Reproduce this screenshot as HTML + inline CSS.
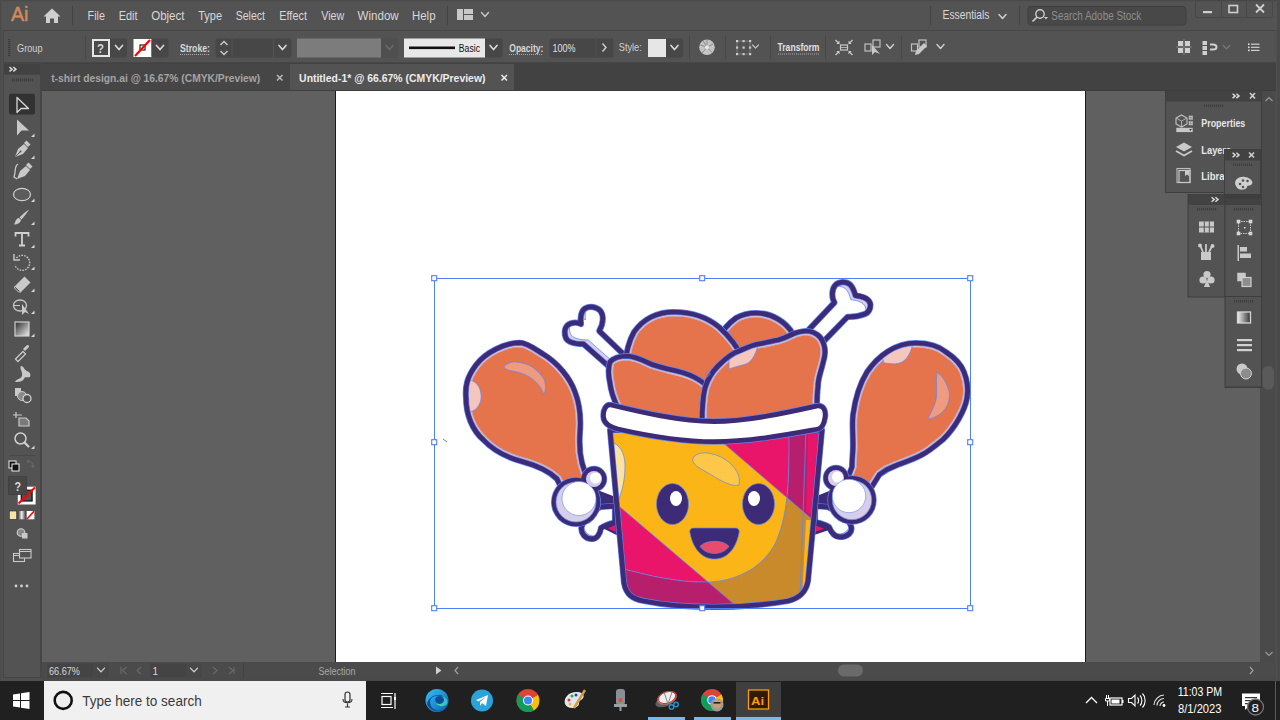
<!DOCTYPE html>
<html><head><meta charset="utf-8"><title>Illustrator</title>
<style>html,body{margin:0;padding:0;width:1280px;height:720px;overflow:hidden;background:#535353;font-family:"Liberation Sans",sans-serif}</style>
</head><body>
<svg width="1280" height="720" viewBox="0 0 1280 720" style="position:absolute;left:0;top:0;display:block"><rect x="0" y="0" width="1280" height="681" fill="#4a4a4a"/>
<rect x="1" y="1" width="1276" height="680" fill="#505050"/>
<rect x="2" y="2" width="1275" height="28" fill="#535353"/>
<rect x="3" y="30" width="1273" height="33" fill="#474747"/>
<rect x="4" y="31" width="1272" height="31" fill="#535353"/>
<rect x="42" y="63" width="1234" height="28" fill="#424242"/>
<rect x="42" y="64" width="248" height="26" fill="#464646"/>
<rect x="290" y="64" width="224" height="26" fill="#535353"/>
<rect x="42" y="90" width="1234" height="1" fill="#3d3d3d"/>
<rect x="3" y="63" width="39" height="615" fill="#464646"/>
<rect x="4" y="64" width="36" height="10" fill="#424242"/>
<rect x="4" y="75" width="36" height="602" fill="#535353"/>
<rect x="42" y="91" width="1220" height="571" fill="#606060"/>
<rect x="335" y="91" width="751" height="571" fill="#1a1a1a"/>
<rect x="336" y="91" width="749" height="571" fill="#ffffff"/>
<path d="M597,491 L618,499 L618,506 L600,505 Z" fill="#3d2b78" stroke="#3d2b78" stroke-width="2" stroke-linejoin="round"/>
<path d="M796,0" fill="none"/>
<path d="M832,491 L812,499 L812,506 L830,505 Z" fill="#3d2b78" stroke="#3d2b78" stroke-width="2" stroke-linejoin="round"/>
<clipPath id="cp1"><path d="M615,506 L600,507 C592,512 583,519 581.5,527 C580.5,533 585,539 592,539 C597,539 600,534 601,528 C605,525 610,523.5 615,522.5 Z"/></clipPath>
<path d="M615,506 L600,507 C592,512 583,519 581.5,527 C580.5,533 585,539 592,539 C597,539 600,534 601,528 C605,525 610,523.5 615,522.5 Z" fill="#d7cfe9"/>
<g clip-path="url(#cp1)"><path d="M615,506 L600,507 C592,512 583,519 581.5,527 C580.5,533 585,539 592,539 C597,539 600,534 601,528 C605,525 610,523.5 615,522.5 Z" transform="translate(2.5 -2.8)" fill="#fff" stroke="#5f86f5" stroke-width=".8"/></g>
<path d="M615,506 L600,507 C592,512 583,519 581.5,527 C580.5,533 585,539 592,539 C597,539 600,534 601,528 C605,525 610,523.5 615,522.5 Z" fill="none" stroke="#5f86f5" stroke-width="6.2" stroke-linejoin="round"/>
<path d="M615,506 L600,507 C592,512 583,519 581.5,527 C580.5,533 585,539 592,539 C597,539 600,534 601,528 C605,525 610,523.5 615,522.5 Z" fill="none" stroke="#3d2b78" stroke-width="4.8" stroke-linejoin="round"/>
<clipPath id="cp2"><path d="M815,506 L828,507 C838,512 848,518 851,526 C853,532 848,537 840,537 C834,537 831,532 829,527 C824,524 819,523 815,522 Z"/></clipPath>
<path d="M815,506 L828,507 C838,512 848,518 851,526 C853,532 848,537 840,537 C834,537 831,532 829,527 C824,524 819,523 815,522 Z" fill="#d7cfe9"/>
<g clip-path="url(#cp2)"><path d="M815,506 L828,507 C838,512 848,518 851,526 C853,532 848,537 840,537 C834,537 831,532 829,527 C824,524 819,523 815,522 Z" transform="translate(-2.5 -2.8)" fill="#fff" stroke="#5f86f5" stroke-width=".8"/></g>
<path d="M815,506 L828,507 C838,512 848,518 851,526 C853,532 848,537 840,537 C834,537 831,532 829,527 C824,524 819,523 815,522 Z" fill="none" stroke="#5f86f5" stroke-width="6.2" stroke-linejoin="round"/>
<path d="M815,506 L828,507 C838,512 848,518 851,526 C853,532 848,537 840,537 C834,537 831,532 829,527 C824,524 819,523 815,522 Z" fill="none" stroke="#3d2b78" stroke-width="4.8" stroke-linejoin="round"/>
<path d="M605,528 L617,523 L617,534 Z" fill="#e8156a" stroke="#3d2b78" stroke-width="2.5" stroke-linejoin="round"/>
<path d="M828,529 L813,523 L813,534 Z" fill="#e8156a" stroke="#3d2b78" stroke-width="2.5" stroke-linejoin="round"/>
<clipPath id="cp3"><path d="M519.5,342.7 C505,343 486,352 476,365 C467,377 465,386 466,398 C466,414 472,430 483.5,440 C493,450 505,457 522,461.5 C535,465 548,470 557,479 L566,498 L590,488 L582,463 C580,455 579,445 580,432 C581,419 580,405 575,392 C570,378 558,363 543,354 C535,349 527,342.7 519.5,342.7 Z"/></clipPath>
<path d="M519.5,342.7 C505,343 486,352 476,365 C467,377 465,386 466,398 C466,414 472,430 483.5,440 C493,450 505,457 522,461.5 C535,465 548,470 557,479 L566,498 L590,488 L582,463 C580,455 579,445 580,432 C581,419 580,405 575,392 C570,378 558,363 543,354 C535,349 527,342.7 519.5,342.7 Z" fill="#e5734b"/>
<path d="M519.5,342.7 C505,343 486,352 476,365 C467,377 465,386 466,398 C466,414 472,430 483.5,440 C493,450 505,457 522,461.5 C535,465 548,470 557,479 L566,498 L590,488 L582,463 C580,455 579,445 580,432 C581,419 580,405 575,392 C570,378 558,363 543,354 C535,349 527,342.7 519.5,342.7 Z" fill="none" stroke="#f3c7bd" stroke-width="9" clip-path="url(#cp3)"/>
<path d="M519.5,342.7 C505,343 486,352 476,365 C467,377 465,386 466,398 C466,414 472,430 483.5,440 C493,450 505,457 522,461.5 C535,465 548,470 557,479 L566,498 L590,488 L582,463 C580,455 579,445 580,432 C581,419 580,405 575,392 C570,378 558,363 543,354 C535,349 527,342.7 519.5,342.7 Z" fill="none" stroke="#5f86f5" stroke-width="8.4" stroke-opacity=".55" clip-path="url(#cp3)"/>
<path d="M519.5,342.7 C505,343 486,352 476,365 C467,377 465,386 466,398 C466,414 472,430 483.5,440 C493,450 505,457 522,461.5 C535,465 548,470 557,479 L566,498 L590,488 L582,463 C580,455 579,445 580,432 C581,419 580,405 575,392 C570,378 558,363 543,354 C535,349 527,342.7 519.5,342.7 Z" fill="none" stroke="#f3c7bd" stroke-width="7.4" clip-path="url(#cp3)"/>
<path d="M519.5,342.7 C505,343 486,352 476,365 C467,377 465,386 466,398 C466,414 472,430 483.5,440 C493,450 505,457 522,461.5 C535,465 548,470 557,479 L566,498 L590,488 L582,463 C580,455 579,445 580,432 C581,419 580,405 575,392 C570,378 558,363 543,354 C535,349 527,342.7 519.5,342.7 Z" fill="none" stroke="#e5734b" stroke-width="4.4" clip-path="url(#cp3)"/>
<g clip-path="url(#cp3)"><path d="M462,380 C470,378 480,382 481,394 C482,402 478,410 470,412 Z" fill="#f3c7bd" stroke="#5f86f5" stroke-width=".7"/><path d="M504,366.7 C508,362 514,361.5 517,362.2 C524,363 530,365 533,367.8 C539,372 542,376 544,379 C546,384 546,390 544,394.5 C542,390 540,386 537.3,383.4 C532,378 527,375 521.7,373.4 C516,371.5 511,371 508.4,370 C506,369 504,368 504,366.7 Z" fill="#f09a7f" stroke="#5f86f5" stroke-width=".7"/></g>
<path d="M519.5,342.7 C505,343 486,352 476,365 C467,377 465,386 466,398 C466,414 472,430 483.5,440 C493,450 505,457 522,461.5 C535,465 548,470 557,479 L566,498 L590,488 L582,463 C580,455 579,445 580,432 C581,419 580,405 575,392 C570,378 558,363 543,354 C535,349 527,342.7 519.5,342.7 Z" fill="none" stroke="#5f86f5" stroke-width="6.1" stroke-linejoin="round"/>
<path d="M519.5,342.7 C505,343 486,352 476,365 C467,377 465,386 466,398 C466,414 472,430 483.5,440 C493,450 505,457 522,461.5 C535,465 548,470 557,479 L566,498 L590,488 L582,463 C580,455 579,445 580,432 C581,419 580,405 575,392 C570,378 558,363 543,354 C535,349 527,342.7 519.5,342.7 Z" fill="none" stroke="#3d2b78" stroke-width="4.7" stroke-linejoin="round"/>
<clipPath id="cp4"><path d="M915.6,343 C930,343 940,347 946,352 C955,358 961,364 964,372 C968,382 968,392 967,398 C965,410 955,428 943,439.5 C934,447 928,452 921.5,455 C912,460 902,463 895,466 C889,468 884,471 879.5,474.5 L866,496 L845,485 L852,467 C852,460 853,452 853,445.6 C853,432 852,425 853,415 C855,400 859,385 867,372 C878,356 895,343 915.6,343 Z"/></clipPath>
<path d="M915.6,343 C930,343 940,347 946,352 C955,358 961,364 964,372 C968,382 968,392 967,398 C965,410 955,428 943,439.5 C934,447 928,452 921.5,455 C912,460 902,463 895,466 C889,468 884,471 879.5,474.5 L866,496 L845,485 L852,467 C852,460 853,452 853,445.6 C853,432 852,425 853,415 C855,400 859,385 867,372 C878,356 895,343 915.6,343 Z" fill="#e5734b"/>
<path d="M915.6,343 C930,343 940,347 946,352 C955,358 961,364 964,372 C968,382 968,392 967,398 C965,410 955,428 943,439.5 C934,447 928,452 921.5,455 C912,460 902,463 895,466 C889,468 884,471 879.5,474.5 L866,496 L845,485 L852,467 C852,460 853,452 853,445.6 C853,432 852,425 853,415 C855,400 859,385 867,372 C878,356 895,343 915.6,343 Z" fill="none" stroke="#f3c7bd" stroke-width="9" clip-path="url(#cp4)"/>
<path d="M915.6,343 C930,343 940,347 946,352 C955,358 961,364 964,372 C968,382 968,392 967,398 C965,410 955,428 943,439.5 C934,447 928,452 921.5,455 C912,460 902,463 895,466 C889,468 884,471 879.5,474.5 L866,496 L845,485 L852,467 C852,460 853,452 853,445.6 C853,432 852,425 853,415 C855,400 859,385 867,372 C878,356 895,343 915.6,343 Z" fill="none" stroke="#5f86f5" stroke-width="8.4" stroke-opacity=".55" clip-path="url(#cp4)"/>
<path d="M915.6,343 C930,343 940,347 946,352 C955,358 961,364 964,372 C968,382 968,392 967,398 C965,410 955,428 943,439.5 C934,447 928,452 921.5,455 C912,460 902,463 895,466 C889,468 884,471 879.5,474.5 L866,496 L845,485 L852,467 C852,460 853,452 853,445.6 C853,432 852,425 853,415 C855,400 859,385 867,372 C878,356 895,343 915.6,343 Z" fill="none" stroke="#f3c7bd" stroke-width="7.4" clip-path="url(#cp4)"/>
<path d="M915.6,343 C930,343 940,347 946,352 C955,358 961,364 964,372 C968,382 968,392 967,398 C965,410 955,428 943,439.5 C934,447 928,452 921.5,455 C912,460 902,463 895,466 C889,468 884,471 879.5,474.5 L866,496 L845,485 L852,467 C852,460 853,452 853,445.6 C853,432 852,425 853,415 C855,400 859,385 867,372 C878,356 895,343 915.6,343 Z" fill="none" stroke="#e5734b" stroke-width="4.4" clip-path="url(#cp4)"/>
<g clip-path="url(#cp4)"><path d="M880,350 C890,342 906,340 913,342 C912,350 908,360 900,363 C894,365 888,363 884,363 Z" fill="#f3c7bd" stroke="#5f86f5" stroke-width=".7"/><path d="M936.7,372.3 C941,374 946,381 949,391 C951,401 946,410 940,414 C936,417 931,419 927.8,419 C931,412 936,404 936.5,396 C937,388 936,380 936.7,372.3 Z" fill="#f09a7f" stroke="#5f86f5" stroke-width=".7"/></g>
<path d="M915.6,343 C930,343 940,347 946,352 C955,358 961,364 964,372 C968,382 968,392 967,398 C965,410 955,428 943,439.5 C934,447 928,452 921.5,455 C912,460 902,463 895,466 C889,468 884,471 879.5,474.5 L866,496 L845,485 L852,467 C852,460 853,452 853,445.6 C853,432 852,425 853,415 C855,400 859,385 867,372 C878,356 895,343 915.6,343 Z" fill="none" stroke="#5f86f5" stroke-width="6.1" stroke-linejoin="round"/>
<path d="M915.6,343 C930,343 940,347 946,352 C955,358 961,364 964,372 C968,382 968,392 967,398 C965,410 955,428 943,439.5 C934,447 928,452 921.5,455 C912,460 902,463 895,466 C889,468 884,471 879.5,474.5 L866,496 L845,485 L852,467 C852,460 853,452 853,445.6 C853,432 852,425 853,415 C855,400 859,385 867,372 C878,356 895,343 915.6,343 Z" fill="none" stroke="#3d2b78" stroke-width="4.7" stroke-linejoin="round"/>
<circle cx="594" cy="479" r="13.2" fill="#5f86f5"/>
<circle cx="576" cy="502" r="25.0" fill="#5f86f5"/>
<circle cx="836" cy="478" r="13.2" fill="#5f86f5"/>
<circle cx="852" cy="500" r="24.7" fill="#5f86f5"/>
<circle cx="594" cy="479" r="12.5" fill="#3d2b78"/>
<circle cx="576" cy="502" r="24.3" fill="#3d2b78"/>
<circle cx="836" cy="478" r="12.5" fill="#3d2b78"/>
<circle cx="852" cy="500" r="24" fill="#3d2b78"/>
<circle cx="594" cy="479" r="8" fill="#d7cfe9"/><circle cx="595.5" cy="478" r="5.5" fill="#fff"/>
<circle cx="836" cy="478" r="8" fill="#d7cfe9"/><circle cx="837.5" cy="477" r="5.5" fill="#fff"/>
<circle cx="576" cy="502" r="20" fill="#d7cfe9" stroke="#5f86f5" stroke-width=".7"/><circle cx="579" cy="498.5" r="17" fill="#fff" stroke="#5f86f5" stroke-width=".6"/>
<circle cx="852" cy="500" r="19.7" fill="#d7cfe9" stroke="#5f86f5" stroke-width=".7"/><circle cx="849" cy="496" r="16.7" fill="#fff" stroke="#5f86f5" stroke-width=".6"/>
<clipPath id="cp5"><path d="M610.8,368.2 L583.7,344.2 C576,344 567,343 565.5,337 C563.5,330 566,325 570.5,323.5 C575,322 579,323 581,324 C580,318 581,311 585,308.5 C590,305.5 597,307 600.5,311 C603.5,315 604,323 599.2,330.9 L624.2,354.9 Z"/></clipPath>
<path d="M610.8,368.2 L583.7,344.2 C576,344 567,343 565.5,337 C563.5,330 566,325 570.5,323.5 C575,322 579,323 581,324 C580,318 581,311 585,308.5 C590,305.5 597,307 600.5,311 C603.5,315 604,323 599.2,330.9 L624.2,354.9 Z" fill="#d7cfe9"/>
<g clip-path="url(#cp5)"><path d="M610.8,368.2 L583.7,344.2 C576,344 567,343 565.5,337 C563.5,330 566,325 570.5,323.5 C575,322 579,323 581,324 C580,318 581,311 585,308.5 C590,305.5 597,307 600.5,311 C603.5,315 604,323 599.2,330.9 L624.2,354.9 Z" transform="translate(4.6 -4.2)" fill="#fff" stroke="#5f86f5" stroke-width=".8"/></g>
<path d="M610.8,368.2 L583.7,344.2 C576,344 567,343 565.5,337 C563.5,330 566,325 570.5,323.5 C575,322 579,323 581,324 C580,318 581,311 585,308.5 C590,305.5 597,307 600.5,311 C603.5,315 604,323 599.2,330.9 L624.2,354.9 Z" fill="none" stroke="#5f86f5" stroke-width="6.2" stroke-linejoin="round"/>
<path d="M610.8,368.2 L583.7,344.2 C576,344 567,343 565.5,337 C563.5,330 566,325 570.5,323.5 C575,322 579,323 581,324 C580,318 581,311 585,308.5 C590,305.5 597,307 600.5,311 C603.5,315 604,323 599.2,330.9 L624.2,354.9 Z" fill="none" stroke="#3d2b78" stroke-width="4.8" stroke-linejoin="round"/>
<clipPath id="cp6"><path d="M808.5,330 L834.5,302.5 C831.5,298 831.5,290 835,285.5 C838.5,281.5 846,281 850,284.5 C853,287 854,291 855.5,295.5 C860,296 866,297 869,301 C872,305 870,312 865,314 C860,316 853,317 847.5,316.8 L824,341 Z"/></clipPath>
<path d="M808.5,330 L834.5,302.5 C831.5,298 831.5,290 835,285.5 C838.5,281.5 846,281 850,284.5 C853,287 854,291 855.5,295.5 C860,296 866,297 869,301 C872,305 870,312 865,314 C860,316 853,317 847.5,316.8 L824,341 Z" fill="#d7cfe9"/>
<g clip-path="url(#cp6)"><path d="M808.5,330 L834.5,302.5 C831.5,298 831.5,290 835,285.5 C838.5,281.5 846,281 850,284.5 C853,287 854,291 855.5,295.5 C860,296 866,297 869,301 C872,305 870,312 865,314 C860,316 853,317 847.5,316.8 L824,341 Z" transform="translate(-4.6 4.2)" fill="#fff" stroke="#5f86f5" stroke-width=".8"/></g>
<path d="M808.5,330 L834.5,302.5 C831.5,298 831.5,290 835,285.5 C838.5,281.5 846,281 850,284.5 C853,287 854,291 855.5,295.5 C860,296 866,297 869,301 C872,305 870,312 865,314 C860,316 853,317 847.5,316.8 L824,341 Z" fill="none" stroke="#5f86f5" stroke-width="6.2" stroke-linejoin="round"/>
<path d="M808.5,330 L834.5,302.5 C831.5,298 831.5,290 835,285.5 C838.5,281.5 846,281 850,284.5 C853,287 854,291 855.5,295.5 C860,296 866,297 869,301 C872,305 870,312 865,314 C860,316 853,317 847.5,316.8 L824,341 Z" fill="none" stroke="#3d2b78" stroke-width="4.8" stroke-linejoin="round"/>
<clipPath id="cp7"><path d="M712,370 C712,345 722,328 736,318 C745,313 752,313 756,313 C772,313 786,322 793,334 C797,342 798,350 798,360 L798,405 L712,405 Z"/></clipPath>
<path d="M712,370 C712,345 722,328 736,318 C745,313 752,313 756,313 C772,313 786,322 793,334 C797,342 798,350 798,360 L798,405 L712,405 Z" fill="#e5734b"/>
<path d="M712,370 C712,345 722,328 736,318 C745,313 752,313 756,313 C772,313 786,322 793,334 C797,342 798,350 798,360 L798,405 L712,405 Z" fill="none" stroke="#f3c7bd" stroke-width="9" clip-path="url(#cp7)"/>
<path d="M712,370 C712,345 722,328 736,318 C745,313 752,313 756,313 C772,313 786,322 793,334 C797,342 798,350 798,360 L798,405 L712,405 Z" fill="none" stroke="#5f86f5" stroke-width="8.4" stroke-opacity=".55" clip-path="url(#cp7)"/>
<path d="M712,370 C712,345 722,328 736,318 C745,313 752,313 756,313 C772,313 786,322 793,334 C797,342 798,350 798,360 L798,405 L712,405 Z" fill="none" stroke="#f3c7bd" stroke-width="7.4" clip-path="url(#cp7)"/>
<path d="M712,370 C712,345 722,328 736,318 C745,313 752,313 756,313 C772,313 786,322 793,334 C797,342 798,350 798,360 L798,405 L712,405 Z" fill="none" stroke="#e5734b" stroke-width="4.4" clip-path="url(#cp7)"/>
<path d="M712,370 C712,345 722,328 736,318 C745,313 752,313 756,313 C772,313 786,322 793,334 C797,342 798,350 798,360 L798,405 L712,405 Z" fill="none" stroke="#5f86f5" stroke-width="6.1" stroke-linejoin="round"/>
<path d="M712,370 C712,345 722,328 736,318 C745,313 752,313 756,313 C772,313 786,322 793,334 C797,342 798,350 798,360 L798,405 L712,405 Z" fill="none" stroke="#3d2b78" stroke-width="4.7" stroke-linejoin="round"/>
<clipPath id="cp8"><path d="M624,405 C622,380 624,350 634,332 C644,318 658,312 674,312 C694,312 708,318 719,327 C729,336 737,346 744,360 L752,405 Z"/></clipPath>
<path d="M624,405 C622,380 624,350 634,332 C644,318 658,312 674,312 C694,312 708,318 719,327 C729,336 737,346 744,360 L752,405 Z" fill="#e5734b"/>
<path d="M624,405 C622,380 624,350 634,332 C644,318 658,312 674,312 C694,312 708,318 719,327 C729,336 737,346 744,360 L752,405 Z" fill="none" stroke="#f3c7bd" stroke-width="9" clip-path="url(#cp8)"/>
<path d="M624,405 C622,380 624,350 634,332 C644,318 658,312 674,312 C694,312 708,318 719,327 C729,336 737,346 744,360 L752,405 Z" fill="none" stroke="#5f86f5" stroke-width="8.4" stroke-opacity=".55" clip-path="url(#cp8)"/>
<path d="M624,405 C622,380 624,350 634,332 C644,318 658,312 674,312 C694,312 708,318 719,327 C729,336 737,346 744,360 L752,405 Z" fill="none" stroke="#f3c7bd" stroke-width="7.4" clip-path="url(#cp8)"/>
<path d="M624,405 C622,380 624,350 634,332 C644,318 658,312 674,312 C694,312 708,318 719,327 C729,336 737,346 744,360 L752,405 Z" fill="none" stroke="#e5734b" stroke-width="4.4" clip-path="url(#cp8)"/>
<path d="M624,405 C622,380 624,350 634,332 C644,318 658,312 674,312 C694,312 708,318 719,327 C729,336 737,346 744,360 L752,405 Z" fill="none" stroke="#5f86f5" stroke-width="6.1" stroke-linejoin="round"/>
<path d="M624,405 C622,380 624,350 634,332 C644,318 658,312 674,312 C694,312 708,318 719,327 C729,336 737,346 744,360 L752,405 Z" fill="none" stroke="#3d2b78" stroke-width="4.7" stroke-linejoin="round"/>
<clipPath id="cp9"><path d="M618,408 C614,400 611,392 610,383 C608,374 608,368 610,362 C614,357 620,356 628,356 C638,357 646,362 652,364.5 C660,367 664,368 668,369 C678,371 686,373 694,377 C702,381 708,386 712,392 L714,425 L618,425 Z"/></clipPath>
<path d="M618,408 C614,400 611,392 610,383 C608,374 608,368 610,362 C614,357 620,356 628,356 C638,357 646,362 652,364.5 C660,367 664,368 668,369 C678,371 686,373 694,377 C702,381 708,386 712,392 L714,425 L618,425 Z" fill="#e5734b"/>
<path d="M618,408 C614,400 611,392 610,383 C608,374 608,368 610,362 C614,357 620,356 628,356 C638,357 646,362 652,364.5 C660,367 664,368 668,369 C678,371 686,373 694,377 C702,381 708,386 712,392 L714,425 L618,425 Z" fill="none" stroke="#f3c7bd" stroke-width="9" clip-path="url(#cp9)"/>
<path d="M618,408 C614,400 611,392 610,383 C608,374 608,368 610,362 C614,357 620,356 628,356 C638,357 646,362 652,364.5 C660,367 664,368 668,369 C678,371 686,373 694,377 C702,381 708,386 712,392 L714,425 L618,425 Z" fill="none" stroke="#5f86f5" stroke-width="8.4" stroke-opacity=".55" clip-path="url(#cp9)"/>
<path d="M618,408 C614,400 611,392 610,383 C608,374 608,368 610,362 C614,357 620,356 628,356 C638,357 646,362 652,364.5 C660,367 664,368 668,369 C678,371 686,373 694,377 C702,381 708,386 712,392 L714,425 L618,425 Z" fill="none" stroke="#f3c7bd" stroke-width="7.4" clip-path="url(#cp9)"/>
<path d="M618,408 C614,400 611,392 610,383 C608,374 608,368 610,362 C614,357 620,356 628,356 C638,357 646,362 652,364.5 C660,367 664,368 668,369 C678,371 686,373 694,377 C702,381 708,386 712,392 L714,425 L618,425 Z" fill="none" stroke="#e5734b" stroke-width="4.4" clip-path="url(#cp9)"/>
<path d="M618,408 C614,400 611,392 610,383 C608,374 608,368 610,362 C614,357 620,356 628,356 C638,357 646,362 652,364.5 C660,367 664,368 668,369 C678,371 686,373 694,377 C702,381 708,386 712,392 L714,425 L618,425 Z" fill="none" stroke="#5f86f5" stroke-width="6.1" stroke-linejoin="round"/>
<path d="M618,408 C614,400 611,392 610,383 C608,374 608,368 610,362 C614,357 620,356 628,356 C638,357 646,362 652,364.5 C660,367 664,368 668,369 C678,371 686,373 694,377 C702,381 708,386 712,392 L714,425 L618,425 Z" fill="none" stroke="#3d2b78" stroke-width="4.7" stroke-linejoin="round"/>
<clipPath id="cp10"><path d="M702,425 C702,410 702,400 705,388 C708,378 712,372 718,366 C726,358 732,353 739,351 C748,347 752,345 758,344 C766,343 772,341 778,340 C786,338 790,335 794,333.5 C800,331.5 804,331 806,331 C812,331 816,333 820,337 C823,341 825,346 825,352 C825,358 823,362 822,367 C820,374 818,379 818,386 C817,394 817,400 817,406 L818,425 Z"/></clipPath>
<path d="M702,425 C702,410 702,400 705,388 C708,378 712,372 718,366 C726,358 732,353 739,351 C748,347 752,345 758,344 C766,343 772,341 778,340 C786,338 790,335 794,333.5 C800,331.5 804,331 806,331 C812,331 816,333 820,337 C823,341 825,346 825,352 C825,358 823,362 822,367 C820,374 818,379 818,386 C817,394 817,400 817,406 L818,425 Z" fill="#e5734b"/>
<path d="M702,425 C702,410 702,400 705,388 C708,378 712,372 718,366 C726,358 732,353 739,351 C748,347 752,345 758,344 C766,343 772,341 778,340 C786,338 790,335 794,333.5 C800,331.5 804,331 806,331 C812,331 816,333 820,337 C823,341 825,346 825,352 C825,358 823,362 822,367 C820,374 818,379 818,386 C817,394 817,400 817,406 L818,425 Z" fill="none" stroke="#f3c7bd" stroke-width="9" clip-path="url(#cp10)"/>
<path d="M702,425 C702,410 702,400 705,388 C708,378 712,372 718,366 C726,358 732,353 739,351 C748,347 752,345 758,344 C766,343 772,341 778,340 C786,338 790,335 794,333.5 C800,331.5 804,331 806,331 C812,331 816,333 820,337 C823,341 825,346 825,352 C825,358 823,362 822,367 C820,374 818,379 818,386 C817,394 817,400 817,406 L818,425 Z" fill="none" stroke="#5f86f5" stroke-width="8.4" stroke-opacity=".55" clip-path="url(#cp10)"/>
<path d="M702,425 C702,410 702,400 705,388 C708,378 712,372 718,366 C726,358 732,353 739,351 C748,347 752,345 758,344 C766,343 772,341 778,340 C786,338 790,335 794,333.5 C800,331.5 804,331 806,331 C812,331 816,333 820,337 C823,341 825,346 825,352 C825,358 823,362 822,367 C820,374 818,379 818,386 C817,394 817,400 817,406 L818,425 Z" fill="none" stroke="#f3c7bd" stroke-width="7.4" clip-path="url(#cp10)"/>
<path d="M702,425 C702,410 702,400 705,388 C708,378 712,372 718,366 C726,358 732,353 739,351 C748,347 752,345 758,344 C766,343 772,341 778,340 C786,338 790,335 794,333.5 C800,331.5 804,331 806,331 C812,331 816,333 820,337 C823,341 825,346 825,352 C825,358 823,362 822,367 C820,374 818,379 818,386 C817,394 817,400 817,406 L818,425 Z" fill="none" stroke="#e5734b" stroke-width="4.4" clip-path="url(#cp10)"/>
<g clip-path="url(#cp10)"><path d="M729,360 C740,350 752,347 758,344 C757,352 752,362 746,364 C740,366 734,367 729,369 Z" fill="#f3c7bd" stroke="#5f86f5" stroke-width=".7"/></g>
<path d="M702,425 C702,410 702,400 705,388 C708,378 712,372 718,366 C726,358 732,353 739,351 C748,347 752,345 758,344 C766,343 772,341 778,340 C786,338 790,335 794,333.5 C800,331.5 804,331 806,331 C812,331 816,333 820,337 C823,341 825,346 825,352 C825,358 823,362 822,367 C820,374 818,379 818,386 C817,394 817,400 817,406 L818,425 Z" fill="none" stroke="#5f86f5" stroke-width="6.1" stroke-linejoin="round"/>
<path d="M702,425 C702,410 702,400 705,388 C708,378 712,372 718,366 C726,358 732,353 739,351 C748,347 752,345 758,344 C766,343 772,341 778,340 C786,338 790,335 794,333.5 C800,331.5 804,331 806,331 C812,331 816,333 820,337 C823,341 825,346 825,352 C825,358 823,362 822,367 C820,374 818,379 818,386 C817,394 817,400 817,406 L818,425 Z" fill="none" stroke="#3d2b78" stroke-width="4.7" stroke-linejoin="round"/>
<clipPath id="bk"><path d="M610,430 L624,583 C626,594 632,599 644,601 C668,606 690,607 714,607 C740,607 764,605 788,601 C800,598 806,592 808,581 L822,430 Z"/></clipPath>
<clipPath id="ylc"><path d="M600,425 L789,425 C789,470 790,510 776,542 C764,566 740,580 711,582 C680,583 650,576 620,568 L600,564 Z"/></clipPath>
<path d="M610,430 L624,583 C626,594 632,599 644,601 C668,606 690,607 714,607 C740,607 764,605 788,601 C800,598 806,592 808,581 L822,430 Z" fill="#fbb516"/>
<g clip-path="url(#bk)"><rect x="600" y="420" width="230" height="200" fill="#c98a2b"/>
<path fill="#b71f6c" d="M700,423 L830,423 L830,534.6 Z"/>
<path fill="#b71f6c" d="M600,490 L750,617.7 L600,617.7 Z"/>
<path fill="#fbb516" d="M600,425 L789,425 C789,470 790,510 776,542 C764,566 740,580 711,582 C680,583 650,576 620,568 L600,564 Z"/>
<g clip-path="url(#ylc)"><path fill="#e8156a" d="M700,423 L830,423 L830,534.6 Z"/><path fill="#e8156a" d="M600,490 L750,617.7 L600,617.7 Z"/></g>
<path fill="#fbb516" d="M806,520 L818,520 L814,600 L802,600 Z"/>
<path fill="#e8156a" d="M808,430 L820,430 L818,518 L806,512 Z"/>
<path fill="none" stroke="#5f86f5" stroke-width="0.8" d="M789,425 C789,470 790,510 776,542 C764,566 740,580 711,582 C680,583 650,576 620,568 M700,423 L830,534.6 M600,490 L750,617.7 M806,430 L800,600"/>
<path fill="#fae3a3" stroke="#5f86f5" stroke-width=".7" d="M611,442 C619,444 625,452 625,466 C625,480 622,492 618,501 L614,501 Z"/>
<path fill="#fdc84a" stroke="#5f86f5" stroke-width=".7" d="M693,458 C698,450 714,452 726,460 C736,467 741,476 739,485 C733,487 722,482 710,474 C699,468 691,464 693,458 Z"/>
</g>
<path d="M610,430 L624,583 C626,594 632,599 644,601 C668,606 690,607 714,607 C740,607 764,605 788,601 C800,598 806,592 808,581 L822,430 Z" fill="none" stroke="#5f86f5" stroke-width="6.1" stroke-linejoin="round"/>
<path d="M610,430 L624,583 C626,594 632,599 644,601 C668,606 690,607 714,607 C740,607 764,605 788,601 C800,598 806,592 808,581 L822,430 Z" fill="none" stroke="#3d2b78" stroke-width="4.8" stroke-linejoin="round"/>
<path d="M611,405 C640,412 680,421.5 714,421.5 C748,421.5 790,412 817,406 C823,405 826,410 825,417 C824,424 822,428 818,429 C790,434 750,441.7 714,441.7 C678,441.7 640,434 618,429 C610,427 604,424 603.5,417 C603,410 606,404 611,405 Z" fill="#fff" stroke="#5f86f5" stroke-width="6.2" stroke-linejoin="round"/>
<path d="M611,405 C640,412 680,421.5 714,421.5 C748,421.5 790,412 817,406 C823,405 826,410 825,417 C824,424 822,428 818,429 C790,434 750,441.7 714,441.7 C678,441.7 640,434 618,429 C610,427 604,424 603.5,417 C603,410 606,404 611,405 Z" fill="#fff" stroke="#3d2b78" stroke-width="4.8" stroke-linejoin="round"/>
<g fill="#3d2b78" stroke="#5f86f5" stroke-width=".7"><ellipse cx="672.5" cy="504" rx="16" ry="20.5"/><ellipse cx="758.5" cy="504" rx="16" ry="20.5"/><path d="M694,528 L735,528 C738,528 740,530 739,533 C736,549 727,559 714.5,559 C702,559 693,549 690,533 C689,530 691,528 694,528 Z"/></g>
<g fill="#fff"><ellipse cx="676" cy="498.5" rx="6" ry="7.4"/><ellipse cx="754" cy="498.5" rx="6" ry="7.4"/></g>
<path fill="#e84b6b" stroke="#5f86f5" stroke-width=".6" d="M700,546.5 C705,539.5 724,539.5 729,546.5 C725,551.5 720,553.5 714.5,553.5 C709,553.5 704,551.5 700,546.5 Z"/>
<rect x="705.5" y="372" width="4" height="4" fill="none" stroke="#5f86f5" stroke-width=".8" transform="rotate(45 707.5 374)"/>
<path d="M443,439 L447,442" stroke="#5f86f5" stroke-width="1"/>
<rect x="434.5" y="278.5" width="536" height="330" fill="none" stroke="#4f7ff5" stroke-width="1"/><rect x="431.7" y="275.7" width="5" height="5" fill="#fff" stroke="#4f7ff5" stroke-width="1.1"/><rect x="699.7" y="275.7" width="5" height="5" fill="#fff" stroke="#4f7ff5" stroke-width="1.1"/><rect x="967.7" y="275.7" width="5" height="5" fill="#fff" stroke="#4f7ff5" stroke-width="1.1"/><rect x="431.7" y="439.7" width="5" height="5" fill="#fff" stroke="#4f7ff5" stroke-width="1.1"/><rect x="967.7" y="439.7" width="5" height="5" fill="#fff" stroke="#4f7ff5" stroke-width="1.1"/><rect x="431.7" y="605.7" width="5" height="5" fill="#fff" stroke="#4f7ff5" stroke-width="1.1"/><rect x="699.7" y="605.7" width="5" height="5" fill="#fff" stroke="#4f7ff5" stroke-width="1.1"/><rect x="967.7" y="605.7" width="5" height="5" fill="#fff" stroke="#4f7ff5" stroke-width="1.1"/>
<rect x="1260" y="91" width="15.5" height="571" fill="#4a4a4a"/>
<rect x="1262.5" y="366" width="11.5" height="23.5" fill="#5a5a5a" rx="5.5"/>
<path d="M1265.5,101 L1269,97.5 L1272.5,101" fill="none" stroke="#9a9a9a" stroke-width="1.2"/>
<path d="M1265.5,652 L1269,655.5 L1272.5,652" fill="none" stroke="#9a9a9a" stroke-width="1.2"/>
<rect x="42" y="662" width="1234" height="16" fill="#4b4b4b"/>
<rect x="42" y="677" width="1234" height="4" fill="#4a4a4a"/>
<text x="11" y="21.2" font-family="Liberation Sans" font-size="20.5" fill="#d08a5b" textLength="17.5" lengthAdjust="spacingAndGlyphs" stroke="#d08a5b" stroke-width="0.5">Ai</text>
<path d="M52,8.5 L43.5,16.5 L46,16.5 L46,23 L50,23 L50,18.5 L54,18.5 L54,23 L58,23 L58,16.5 L60.5,16.5 Z" fill="#cfcfcf"/>
<line x1="72.5" y1="6" x2="72.5" y2="25" stroke="#444" stroke-width="1"/>
<text x="87.6" y="19.5" font-family="Liberation Sans" font-size="12" fill="#d8d8d8" textLength="17.4" lengthAdjust="spacingAndGlyphs">File</text>
<text x="118.7" y="19.5" font-family="Liberation Sans" font-size="12" fill="#d8d8d8" textLength="18.8" lengthAdjust="spacingAndGlyphs">Edit</text>
<text x="151.2" y="19.5" font-family="Liberation Sans" font-size="12" fill="#d8d8d8" textLength="33.3" lengthAdjust="spacingAndGlyphs">Object</text>
<text x="198.2" y="19.5" font-family="Liberation Sans" font-size="12" fill="#d8d8d8" textLength="23.8" lengthAdjust="spacingAndGlyphs">Type</text>
<text x="235.7" y="19.5" font-family="Liberation Sans" font-size="12" fill="#d8d8d8" textLength="29.3" lengthAdjust="spacingAndGlyphs">Select</text>
<text x="279.2" y="19.5" font-family="Liberation Sans" font-size="12" fill="#d8d8d8" textLength="27.8" lengthAdjust="spacingAndGlyphs">Effect</text>
<text x="321.2" y="19.5" font-family="Liberation Sans" font-size="12" fill="#d8d8d8" textLength="23.0" lengthAdjust="spacingAndGlyphs">View</text>
<text x="357.5" y="19.5" font-family="Liberation Sans" font-size="12" fill="#d8d8d8" textLength="41.2" lengthAdjust="spacingAndGlyphs">Window</text>
<text x="412" y="19.5" font-family="Liberation Sans" font-size="12" fill="#d8d8d8" textLength="23.5" lengthAdjust="spacingAndGlyphs">Help</text>
<line x1="447.5" y1="6" x2="447.5" y2="25" stroke="#444" stroke-width="1"/>
<rect x="457" y="9" width="6" height="11" fill="#c8c8c8"/>
<rect x="464" y="9" width="9" height="5" fill="#c8c8c8"/>
<rect x="464" y="15" width="9" height="5" fill="#c8c8c8"/>
<path d="M481.5,12.5 L485,16.5 L488.5,12.5" fill="none" stroke="#c8c8c8" stroke-width="1.4" stroke-linecap="round" stroke-linejoin="round"/>
<line x1="930.5" y1="6" x2="930.5" y2="25" stroke="#444" stroke-width="1"/>
<text x="942.5" y="19.3" font-family="Liberation Sans" font-size="12" fill="#d8d8d8" textLength="47" lengthAdjust="spacingAndGlyphs">Essentials</text>
<path d="M999.0,14.6 L1002.5,18.4 L1006.0,14.6" fill="none" stroke="#d0d0d0" stroke-width="1.5" stroke-linecap="round" stroke-linejoin="round"/>
<line x1="1019.5" y1="6" x2="1019.5" y2="25" stroke="#444" stroke-width="1"/>
<rect x="1028" y="6.5" width="158" height="18.5" fill="#484848" rx="3" stroke="#3e3e3e" stroke-width="1"/>
<circle cx="1040" cy="14" r="4.2" fill="none" stroke="#cfcfcf" stroke-width="1.4"/>
<line x1="1037" y1="17.2" x2="1032.5" y2="21.5" stroke="#cfcfcf" stroke-width="1.6"/>
<path d="M1044,17 L1048,17 L1046,19.5 Z" fill="#cfcfcf"/>
<text x="1051.3" y="19.7" font-family="Liberation Sans" font-size="12" fill="#8e8e8e" textLength="90" lengthAdjust="spacingAndGlyphs">Search Adobe Stock</text>
<rect x="1195.5" y="0.5" width="77" height="17" fill="none" rx="2" stroke="#474747" stroke-width="1"/>
<line x1="1221.5" y1="1" x2="1221.5" y2="17" stroke="#474747" stroke-width="1"/>
<line x1="1246.5" y1="1" x2="1246.5" y2="17" stroke="#474747" stroke-width="1"/>
<rect x="1203" y="11" width="9" height="2.2" fill="#cfcfcf"/>
<rect x="1229" y="5.5" width="8.5" height="7" fill="none" stroke="#cfcfcf" stroke-width="1.6"/>
<path d="M1256,4.5 L1264,12.5 M1264,4.5 L1256,12.5" fill="none" stroke="#cfcfcf" stroke-width="1.8"/>
<rect x="8" y="39" width="2.2" height="1.2" fill="#3c3c3c"/>
<rect x="8" y="41" width="2.2" height="1.2" fill="#3c3c3c"/>
<rect x="8" y="43" width="2.2" height="1.2" fill="#3c3c3c"/>
<rect x="8" y="45" width="2.2" height="1.2" fill="#3c3c3c"/>
<rect x="8" y="47" width="2.2" height="1.2" fill="#3c3c3c"/>
<rect x="8" y="49" width="2.2" height="1.2" fill="#3c3c3c"/>
<rect x="8" y="51" width="2.2" height="1.2" fill="#3c3c3c"/>
<rect x="8" y="53" width="2.2" height="1.2" fill="#3c3c3c"/>
<rect x="8" y="55" width="2.2" height="1.2" fill="#3c3c3c"/>
<text x="17" y="52.3" font-family="Liberation Sans" font-size="10.5" fill="#cfcfcf" textLength="25.5" lengthAdjust="spacingAndGlyphs">Group</text>
<line x1="85.5" y1="36" x2="85.5" y2="59" stroke="#474747" stroke-width="1"/>
<rect x="92" y="39" width="18" height="18" fill="#e6e6e6"/>
<rect x="94" y="41" width="14" height="14" fill="#4a4a4a"/>
<text x="97" y="52.5" font-family="Liberation Sans" font-size="12" fill="#d8d8d8" font-weight="bold" textLength="7" lengthAdjust="spacingAndGlyphs">?</text>
<rect x="110" y="38.5" width="17" height="19" fill="#474747" rx="2"/>
<path d="M115.5,45.5 L119,49.5 L122.5,45.5" fill="none" stroke="#d8d8d8" stroke-width="1.7" stroke-linecap="round" stroke-linejoin="round"/>
<rect x="133.5" y="39" width="18" height="18" fill="#ffffff"/>
<rect x="140" y="45" width="5" height="5" fill="none" stroke="#222" stroke-width="1.2"/>
<line x1="135" y1="56" x2="150" y2="40" stroke="#ff0000" stroke-width="2.2"/>
<rect x="151.5" y="38.5" width="17" height="19" fill="#474747" rx="2"/>
<path d="M156.5,45.5 L160,49.5 L163.5,45.5" fill="none" stroke="#d8d8d8" stroke-width="1.7" stroke-linecap="round" stroke-linejoin="round"/>
<text x="180" y="52" font-family="Liberation Sans" font-size="10.5" fill="#d8d8d8" font-weight="bold" textLength="30" lengthAdjust="spacingAndGlyphs">Stroke:</text>
<rect x="180" y="54" width="1" height="1" fill="#aaa"/>
<rect x="182" y="54" width="1" height="1" fill="#aaa"/>
<rect x="184" y="54" width="1" height="1" fill="#aaa"/>
<rect x="186" y="54" width="1" height="1" fill="#aaa"/>
<rect x="188" y="54" width="1" height="1" fill="#aaa"/>
<rect x="190" y="54" width="1" height="1" fill="#aaa"/>
<rect x="192" y="54" width="1" height="1" fill="#aaa"/>
<rect x="194" y="54" width="1" height="1" fill="#aaa"/>
<rect x="196" y="54" width="1" height="1" fill="#aaa"/>
<rect x="198" y="54" width="1" height="1" fill="#aaa"/>
<rect x="200" y="54" width="1" height="1" fill="#aaa"/>
<rect x="202" y="54" width="1" height="1" fill="#aaa"/>
<rect x="204" y="54" width="1" height="1" fill="#aaa"/>
<rect x="206" y="54" width="1" height="1" fill="#aaa"/>
<rect x="208" y="54" width="1" height="1" fill="#aaa"/>
<rect x="215.5" y="38.5" width="76" height="19" fill="#474747" rx="2" stroke="#4d4d4d" stroke-width="0.6"/>
<line x1="232" y1="39" x2="232" y2="57" stroke="#535353" stroke-width="1"/>
<line x1="273.5" y1="39" x2="273.5" y2="57" stroke="#535353" stroke-width="1"/>
<path d="M220.5,45 L224,41.5 L227.5,45" fill="none" stroke="#d0d0d0" stroke-width="1.3"/>
<path d="M220.5,51 L224,54.5 L227.5,51" fill="none" stroke="#d0d0d0" stroke-width="1.3"/>
<path d="M279.0,45.5 L282.5,49.5 L286.0,45.5" fill="none" stroke="#d8d8d8" stroke-width="1.7" stroke-linecap="round" stroke-linejoin="round"/>
<rect x="297" y="38.5" width="84" height="19" fill="#7c7c7c"/>
<rect x="381" y="38.5" width="17" height="19" fill="#4f4f4f"/>
<path d="M386.0,45.5 L389.5,49.5 L393.0,45.5" fill="none" stroke="#6a6a6a" stroke-width="1.7" stroke-linecap="round" stroke-linejoin="round"/>
<rect x="404" y="38.5" width="81" height="19" fill="#e8e8e8"/>
<rect x="409" y="46.5" width="46" height="2.6" fill="#111"/>
<text x="458.8" y="51.5" font-family="Liberation Sans" font-size="10.5" fill="#111" textLength="21.2" lengthAdjust="spacingAndGlyphs">Basic</text>
<rect x="485" y="38.5" width="17.5" height="19" fill="#474747" rx="2"/>
<path d="M490.0,45.5 L493.5,49.5 L497.0,45.5" fill="none" stroke="#d8d8d8" stroke-width="1.7" stroke-linecap="round" stroke-linejoin="round"/>
<text x="509.3" y="51.5" font-family="Liberation Sans" font-size="10.5" fill="#d8d8d8" font-weight="bold" textLength="34" lengthAdjust="spacingAndGlyphs">Opacity:</text>
<rect x="509" y="54" width="1" height="1" fill="#aaa"/>
<rect x="511" y="54" width="1" height="1" fill="#aaa"/>
<rect x="513" y="54" width="1" height="1" fill="#aaa"/>
<rect x="515" y="54" width="1" height="1" fill="#aaa"/>
<rect x="517" y="54" width="1" height="1" fill="#aaa"/>
<rect x="519" y="54" width="1" height="1" fill="#aaa"/>
<rect x="521" y="54" width="1" height="1" fill="#aaa"/>
<rect x="523" y="54" width="1" height="1" fill="#aaa"/>
<rect x="525" y="54" width="1" height="1" fill="#aaa"/>
<rect x="527" y="54" width="1" height="1" fill="#aaa"/>
<rect x="529" y="54" width="1" height="1" fill="#aaa"/>
<rect x="531" y="54" width="1" height="1" fill="#aaa"/>
<rect x="533" y="54" width="1" height="1" fill="#aaa"/>
<rect x="535" y="54" width="1" height="1" fill="#aaa"/>
<rect x="537" y="54" width="1" height="1" fill="#aaa"/>
<rect x="539" y="54" width="1" height="1" fill="#aaa"/>
<rect x="541" y="54" width="1" height="1" fill="#aaa"/>
<rect x="549.5" y="38.5" width="64" height="19" fill="#474747" rx="2" stroke="#4d4d4d" stroke-width="0.6"/>
<line x1="596" y1="39" x2="596" y2="57" stroke="#535353" stroke-width="1"/>
<text x="552.5" y="51.5" font-family="Liberation Sans" font-size="10.5" fill="#e0e0e0" textLength="23" lengthAdjust="spacingAndGlyphs">100%</text>
<path d="M602.5,43.5 L606,47.5 L602.5,51.5" fill="none" stroke="#d0d0d0" stroke-width="1.4"/>
<text x="618.8" y="51.3" font-family="Liberation Sans" font-size="10.5" fill="#cfcfcf" textLength="23" lengthAdjust="spacingAndGlyphs">Style:</text>
<rect x="648" y="39" width="18" height="18" fill="#e6e6e6"/>
<rect x="666" y="38.5" width="17" height="19" fill="#474747" rx="2"/>
<path d="M671.0,45.5 L674.5,49.5 L678.0,45.5" fill="none" stroke="#d8d8d8" stroke-width="1.7" stroke-linecap="round" stroke-linejoin="round"/>
<line x1="689.5" y1="36" x2="689.5" y2="59" stroke="#474747" stroke-width="1"/>
<circle cx="707" cy="47.3" r="7.8" fill="#c4c4c4"/>
<path d="M707,47.3 L707,40 M707,47.3 L713,44 M707,47.3 L712,52.5 M707,47.3 L702,53 M707,47.3 L700.5,45 M707,47.3 L703,40.5" fill="none" stroke="#8a8a8a" stroke-width="1"/>
<circle cx="707" cy="47.3" r="2" fill="#e8e8e8"/>
<line x1="725.5" y1="36" x2="725.5" y2="59" stroke="#474747" stroke-width="1"/>
<rect x="736" y="40" width="2.2" height="2.2" fill="#cfcfcf"/>
<rect x="742.5" y="40" width="2.2" height="2.2" fill="#cfcfcf"/>
<rect x="749" y="40" width="2.2" height="2.2" fill="#cfcfcf"/>
<rect x="736" y="46.5" width="2.2" height="2.2" fill="#cfcfcf"/>
<rect x="749" y="46.5" width="2.2" height="2.2" fill="#cfcfcf"/>
<rect x="736" y="53" width="2.2" height="2.2" fill="#cfcfcf"/>
<rect x="742.5" y="53" width="2.2" height="2.2" fill="#cfcfcf"/>
<rect x="749" y="53" width="2.2" height="2.2" fill="#cfcfcf"/>
<rect x="742.5" y="46.5" width="2.2" height="2.2" fill="#cfcfcf"/>
<rect x="738.5" y="40.6" width="1" height="0.9" fill="#aaa"/>
<rect x="738.5" y="53.6" width="1" height="0.9" fill="#aaa"/>
<rect x="736.6" y="42.5" width="0.9" height="1" fill="#aaa"/>
<rect x="749.6" y="42.5" width="0.9" height="1" fill="#aaa"/>
<rect x="740.5" y="40.6" width="1" height="0.9" fill="#aaa"/>
<rect x="740.5" y="53.6" width="1" height="0.9" fill="#aaa"/>
<rect x="736.6" y="44.5" width="0.9" height="1" fill="#aaa"/>
<rect x="749.6" y="44.5" width="0.9" height="1" fill="#aaa"/>
<rect x="742.5" y="40.6" width="1" height="0.9" fill="#aaa"/>
<rect x="742.5" y="53.6" width="1" height="0.9" fill="#aaa"/>
<rect x="736.6" y="46.5" width="0.9" height="1" fill="#aaa"/>
<rect x="749.6" y="46.5" width="0.9" height="1" fill="#aaa"/>
<rect x="744.5" y="40.6" width="1" height="0.9" fill="#aaa"/>
<rect x="744.5" y="53.6" width="1" height="0.9" fill="#aaa"/>
<rect x="736.6" y="48.5" width="0.9" height="1" fill="#aaa"/>
<rect x="749.6" y="48.5" width="0.9" height="1" fill="#aaa"/>
<rect x="746.5" y="40.6" width="1" height="0.9" fill="#aaa"/>
<rect x="746.5" y="53.6" width="1" height="0.9" fill="#aaa"/>
<rect x="736.6" y="50.5" width="0.9" height="1" fill="#aaa"/>
<rect x="749.6" y="50.5" width="0.9" height="1" fill="#aaa"/>
<rect x="748.5" y="40.6" width="1" height="0.9" fill="#aaa"/>
<rect x="748.5" y="53.6" width="1" height="0.9" fill="#aaa"/>
<rect x="736.6" y="52.5" width="0.9" height="1" fill="#aaa"/>
<rect x="749.6" y="52.5" width="0.9" height="1" fill="#aaa"/>
<path d="M752.5,45.0 L755.5,48.0 L758.5,45.0" fill="none" stroke="#bdbdbd" stroke-width="1.2" stroke-linecap="round" stroke-linejoin="round"/>
<line x1="770.5" y1="36" x2="770.5" y2="59" stroke="#474747" stroke-width="1"/>
<text x="777.5" y="51" font-family="Liberation Sans" font-size="10.5" fill="#e0e0e0" font-weight="bold" textLength="42" lengthAdjust="spacingAndGlyphs">Transform</text>
<rect x="778" y="53.5" width="1" height="1" fill="#aaa"/>
<rect x="780" y="53.5" width="1" height="1" fill="#aaa"/>
<rect x="782" y="53.5" width="1" height="1" fill="#aaa"/>
<rect x="784" y="53.5" width="1" height="1" fill="#aaa"/>
<rect x="786" y="53.5" width="1" height="1" fill="#aaa"/>
<rect x="788" y="53.5" width="1" height="1" fill="#aaa"/>
<rect x="790" y="53.5" width="1" height="1" fill="#aaa"/>
<rect x="792" y="53.5" width="1" height="1" fill="#aaa"/>
<rect x="794" y="53.5" width="1" height="1" fill="#aaa"/>
<rect x="796" y="53.5" width="1" height="1" fill="#aaa"/>
<rect x="798" y="53.5" width="1" height="1" fill="#aaa"/>
<rect x="800" y="53.5" width="1" height="1" fill="#aaa"/>
<rect x="802" y="53.5" width="1" height="1" fill="#aaa"/>
<rect x="804" y="53.5" width="1" height="1" fill="#aaa"/>
<rect x="806" y="53.5" width="1" height="1" fill="#aaa"/>
<rect x="808" y="53.5" width="1" height="1" fill="#aaa"/>
<rect x="810" y="53.5" width="1" height="1" fill="#aaa"/>
<rect x="812" y="53.5" width="1" height="1" fill="#aaa"/>
<rect x="814" y="53.5" width="1" height="1" fill="#aaa"/>
<rect x="816" y="53.5" width="1" height="1" fill="#aaa"/>
<rect x="818" y="53.5" width="1" height="1" fill="#aaa"/>
<line x1="825.5" y1="36" x2="825.5" y2="59" stroke="#474747" stroke-width="1"/>
<rect x="840.5" y="45" width="7" height="5" fill="none" stroke="#c8c8c8" stroke-width="1.2"/>
<line x1="841" y1="47.5" x2="847" y2="47.5" stroke="#c8c8c8" stroke-width="0.8"/>
<line x1="838.0" y1="42.5" x2="835.5" y2="40" stroke="#c8c8c8" stroke-width="1.2"/>
<path d="M839.5,44 L836.3,44 L839.5,40.8 Z" fill="#d0d0d0"/>
<line x1="850.0" y1="42.5" x2="852.5" y2="40" stroke="#c8c8c8" stroke-width="1.2"/>
<path d="M848.5,44 L851.7,44 L848.5,40.8 Z" fill="#d0d0d0"/>
<line x1="838.0" y1="52.5" x2="835.5" y2="55" stroke="#c8c8c8" stroke-width="1.2"/>
<path d="M839.5,51 L836.3,51 L839.5,54.2 Z" fill="#d0d0d0"/>
<line x1="850.0" y1="52.5" x2="852.5" y2="55" stroke="#c8c8c8" stroke-width="1.2"/>
<path d="M848.5,51 L851.7,51 L848.5,54.2 Z" fill="#d0d0d0"/>
<rect x="865" y="44" width="6" height="7" fill="none" stroke="#c0c0c0" stroke-width="1.2"/>
<rect x="873" y="40" width="7" height="7" fill="none" stroke="#c0c0c0" stroke-width="1.2"/>
<path d="M872,45 L872,55 L875,52 L880,54 Z" fill="#c8c8c8"/>
<path d="M886.5,44.5 L890,48.5 L893.5,44.5" fill="none" stroke="#d0d0d0" stroke-width="1.4" stroke-linecap="round" stroke-linejoin="round"/>
<line x1="901.5" y1="36" x2="901.5" y2="59" stroke="#474747" stroke-width="1"/>
<rect x="911.5" y="44" width="6" height="7" fill="none" stroke="#c0c0c0" stroke-width="1.2"/>
<rect x="919" y="40" width="7" height="7" fill="none" stroke="#c0c0c0" stroke-width="1.2"/>
<path d="M915,55 L916,51 L924,43 L927,46 L919,54 Z" fill="#c8c8c8"/>
<path d="M937.0,44.5 L940.5,48.5 L944.0,44.5" fill="none" stroke="#d0d0d0" stroke-width="1.4" stroke-linecap="round" stroke-linejoin="round"/>
<rect x="1178" y="41" width="5" height="5" fill="#d0d0d0"/>
<rect x="1185" y="41" width="5" height="5" fill="#d0d0d0"/>
<rect x="1178" y="48" width="5" height="5" fill="#d0d0d0"/>
<rect x="1185" y="48" width="5" height="5" fill="#d0d0d0"/>
<line x1="1184" y1="39" x2="1184" y2="55" stroke="#8a8a8a" stroke-width="0.8"/>
<line x1="1176" y1="47" x2="1192" y2="47" stroke="#8a8a8a" stroke-width="0.8"/>
<rect x="1202.5" y="41" width="4.5" height="4" fill="#d0d0d0"/>
<rect x="1202.5" y="46" width="4.5" height="4" fill="#d0d0d0"/>
<rect x="1202.5" y="51" width="4.5" height="4" fill="#d0d0d0"/>
<path d="M1210,44.5 L1213,44.5 Q1216.5,44.5 1216.5,47 Q1216.5,49.5 1213,49.5 L1210,49.5" fill="none" stroke="#d0d0d0" stroke-width="2"/>
<path d="M1223.0,45.25 L1226.5,48.75 L1230.0,45.25" fill="none" stroke="#7a7a7a" stroke-width="1.1" stroke-linecap="round" stroke-linejoin="round"/>
<rect x="1248" y="43.400000000000006" width="1.6" height="1.6" fill="#e0e0e0"/>
<rect x="1251" y="43.6" width="8.5" height="1.2" fill="#d0d0d0"/>
<rect x="1248" y="46.5" width="1.6" height="1.6" fill="#e0e0e0"/>
<rect x="1251" y="46.699999999999996" width="8.5" height="1.2" fill="#d0d0d0"/>
<rect x="1248" y="49.6" width="1.6" height="1.6" fill="#e0e0e0"/>
<rect x="1251" y="49.8" width="8.5" height="1.2" fill="#d0d0d0"/>
<path d="M9.5,67.0 L12.1,69.2 L9.5,71.4 M13.3,67.0 L15.9,69.2 L13.3,71.4" fill="none" stroke="#dcdcdc" stroke-width="1.5"/>
<text x="51.2" y="82.2" font-family="Liberation Sans" font-size="11" fill="#a4a4a4" font-weight="bold" textLength="209" lengthAdjust="spacingAndGlyphs">t-shirt design.ai @ 16.67% (CMYK/Preview)</text>
<path d="M277,75 L282.5,80.5 M282.5,75 L277,80.5" fill="none" stroke="#b8b8b8" stroke-width="1.5"/>
<text x="299.1" y="82.2" font-family="Liberation Sans" font-size="11" fill="#ececec" font-weight="bold" textLength="186.4" lengthAdjust="spacingAndGlyphs">Untitled-1* @ 66.67% (CMYK/Preview)</text>
<path d="M501.5,75 L507,80.5 M507,75 L501.5,80.5" fill="none" stroke="#ececec" stroke-width="1.5"/>
<rect x="12" y="78.5" width="1.2" height="3" fill="#3d3d3d"/>
<rect x="14" y="78.5" width="1.2" height="3" fill="#3d3d3d"/>
<rect x="16" y="78.5" width="1.2" height="3" fill="#3d3d3d"/>
<rect x="18" y="78.5" width="1.2" height="3" fill="#3d3d3d"/>
<rect x="20" y="78.5" width="1.2" height="3" fill="#3d3d3d"/>
<rect x="22" y="78.5" width="1.2" height="3" fill="#3d3d3d"/>
<rect x="24" y="78.5" width="1.2" height="3" fill="#3d3d3d"/>
<rect x="26" y="78.5" width="1.2" height="3" fill="#3d3d3d"/>
<rect x="28" y="78.5" width="1.2" height="3" fill="#3d3d3d"/>
<rect x="30" y="78.5" width="1.2" height="3" fill="#3d3d3d"/>
<rect x="32" y="78.5" width="1.2" height="3" fill="#3d3d3d"/>
<rect x="9" y="93.7" width="26" height="20.7" fill="#323232" rx="2"/>
<path d="M17,97.5 L17,112.5 L21,108.5 L28.5,108.5 Z" fill="none" stroke="#d8d8d8" stroke-width="1.3" stroke-linejoin="round"/>
<path d="M17,119.5 L17,135.5 L21.5,130.5 L29,130.5 Z" fill="#c9c9c9"/>
<path d="M31,137 L34.5,137 L34.5,133.5 Z" fill="#d6d6d6"/>
<path d="M15,157 L18,149 L24,144 L28,148 L23,154 Z" fill="#c9c9c9"/>
<path d="M24,143 L26.5,140.5 L30.5,144.5 L28,147 Z" fill="#c9c9c9"/>
<line x1="15.5" y1="156.5" x2="20" y2="152" stroke="#535353" stroke-width="1"/>
<circle cx="20.5" cy="151.5" r="1" fill="#535353"/>
<path d="M31,159 L34.5,159 L34.5,155.5 Z" fill="#d6d6d6"/>
<path d="M17,179 L20,171 L26,166 L30,170 L25,176 Z" fill="#c9c9c9"/>
<path d="M26,165 L28.5,162.5 L32.5,166.5 L30,169 Z" fill="#c9c9c9"/>
<path d="M18,164 C14,166 16,172 14,177 L17,179" fill="none" stroke="#c9c9c9" stroke-width="1.3"/>
<ellipse cx="22" cy="194.5" rx="8.5" ry="6.2" fill="#5c5c5c" stroke="#cfcfcf" stroke-width="1.2"/>
<path d="M31,202 L34.5,202 L34.5,198.5 Z" fill="#d6d6d6"/>
<path d="M29,209.5 C27,213 23,218 21.5,219.5 L19.5,217.5 C21,216 26,211 29,209.5 Z" fill="#c9c9c9"/>
<path d="M19,218 C17,218 16,220 15.5,221 C15,222.5 14.5,223.5 14,224.5 C17,224.5 20,223.5 21,220 Z" fill="#c9c9c9"/>
<path d="M31,225 L34.5,225 L34.5,221.5 Z" fill="#d6d6d6"/>
<path d="M15.5,236.5 L15.5,233 L28.5,233 L28.5,236.5 M22,233 L22,245.5 M19,245.5 L25,245.5" fill="none" stroke="#d0d0d0" stroke-width="1.8"/>
<path d="M31,248 L34.5,248 L34.5,244.5 Z" fill="#d6d6d6"/>
<path d="M16.5,258 A7.5,7.5 0 1 1 15,265" fill="none" stroke="#c9c9c9" stroke-width="1.4" stroke-dasharray="1.6 1.2"/>
<path d="M14,254 L14,260 L20,260" fill="none" stroke="#c9c9c9" stroke-width="1.4"/>
<path d="M31,270 L34.5,270 L34.5,266.5 Z" fill="#d6d6d6"/>
<path d="M15,286 L24.5,276.5 L30.5,282.5 L21,292 Z" fill="#c9c9c9"/>
<path d="M15,286 L21,292 L18.5,292 L14.5,288 Z" fill="#535353" stroke="#c9c9c9" stroke-width="1"/>
<path d="M31,292 L34.5,292 L34.5,288.5 Z" fill="#d6d6d6"/>
<ellipse cx="20" cy="305.5" rx="6.5" ry="5.5" fill="none" stroke="#c9c9c9" stroke-width="1.3"/>
<path d="M22,304 L22,315 L25,312 L29,314 Z" fill="#c9c9c9"/>
<line x1="14" y1="305.5" x2="20" y2="305.5" stroke="#c9c9c9" stroke-width="1"/>
<path d="M31,314 L34.5,314 L34.5,310.5 Z" fill="#d6d6d6"/>
<defs><linearGradient id="g1" x1="0" y1="0" x2="1" y2="1"><stop offset="0" stop-color="#2a2a2a"/><stop offset="1" stop-color="#eeeeee"/></linearGradient></defs>
<rect x="15" y="322" width="14" height="14" fill="url(#g1)" stroke="#d0d0d0" stroke-width="1.2"/>
<path d="M31,337 L34.5,337 L34.5,333.5 Z" fill="#d6d6d6"/>
<path d="M15.5,359 L23,351.5 L25.5,354 L18,361.5 Z" fill="none" stroke="#c9c9c9" stroke-width="1.3"/>
<path d="M23,349 L26.5,345.5 C28,344 30,346 28.5,347.5 L25,351 Z" fill="#c9c9c9"/>
<path d="M15,382 C17,378 20,380 22,376 C23,372 19,368 21,366 C24,366 24,370 27,371 C30,372 31,374 30,377 C28,378 25,376 24,379 C22,382 18,382 15,382 Z" fill="#c9c9c9"/>
<rect x="15" y="388" width="6" height="8" fill="#c9c9c9"/>
<circle cx="22" cy="396" r="4.5" fill="#8a8a8a" stroke="#c9c9c9" stroke-width="1"/><circle cx="27" cy="398.5" r="4" fill="#535353" stroke="#d0d0d0" stroke-width="1.3"/>
<path d="M16,412 L16,418 M13,415 L22,415" fill="none" stroke="#c9c9c9" stroke-width="1.2"/>
<path d="M19,418 L26,418 L29,421 L29,426 L19,426 Z" fill="#7a7a7a" stroke="#c9c9c9" stroke-width="1.2"/>
<circle cx="20.5" cy="438.5" r="5.5" fill="none" stroke="#d0d0d0" stroke-width="1.5"/>
<line x1="24.5" y1="442.5" x2="29" y2="447" stroke="#d0d0d0" stroke-width="2.2"/>
<path d="M31,449 L34.5,449 L34.5,445.5 Z" fill="#d6d6d6"/>
<line x1="9" y1="455.5" x2="35" y2="455.5" stroke="#484848" stroke-width="1"/>
<rect x="9" y="461" width="7" height="7" fill="#111" stroke="#eee" stroke-width="1"/>
<rect x="12" y="464" width="7" height="7" fill="#111" stroke="#eee" stroke-width="1"/>
<path d="M28,461 C31,461 33,463 33,467 M31.5,465.5 L33,467.5 L34.5,465.5 M26.5,462 L28,460.5 L28,463" fill="none" stroke="#6f6f6f" stroke-width="1"/>
<rect x="17.8" y="486.7" width="17.8" height="17.8" fill="#ffffff"/>
<rect x="21.3" y="490.2" width="10.8" height="10.8" fill="#535353" stroke="#111" stroke-width="1.2"/>
<line x1="18.5" y1="503.5" x2="35" y2="487.5" stroke="#ff0000" stroke-width="2"/>
<rect x="8.4" y="476.7" width="18.3" height="17.7" fill="#474747" stroke="#3e3e3e" stroke-width="0.8"/>
<text x="14.5" y="491" font-family="Liberation Sans" font-size="12" fill="#dcdcdc" font-weight="bold" textLength="6.5" lengthAdjust="spacingAndGlyphs">?</text>
<rect x="9.3" y="511" width="7.4" height="8.3" fill="#f5e3a8" stroke="#2a2a2a" stroke-width="0.6"/>
<defs><linearGradient id="g2" x1="0" y1="0" x2="1" y2="0"><stop offset="0" stop-color="#333"/><stop offset=".5" stop-color="#eee"/><stop offset="1" stop-color="#444"/></linearGradient></defs>
<rect x="17.8" y="511" width="7.8" height="8.3" fill="url(#g2)"/>
<rect x="26.7" y="511" width="7.7" height="8.3" fill="#ffffff"/>
<line x1="27" y1="519" x2="34" y2="511.3" stroke="#ff0000" stroke-width="1.6"/>
<circle cx="21" cy="532.5" r="3.8" fill="#8a8a8a" stroke="#d0d0d0" stroke-width="1.1"/>
<rect x="22" y="533" width="5.5" height="5.5" fill="#c9c9c9"/>
<rect x="13.5" y="553.5" width="11" height="8" fill="none" stroke="#c9c9c9" stroke-width="1.1"/>
<rect x="19.5" y="549.5" width="11.5" height="8.5" fill="#535353" stroke="#c9c9c9" stroke-width="1.1"/>
<line x1="19.5" y1="551.5" x2="31" y2="551.5" stroke="#c9c9c9" stroke-width="1"/>
<line x1="13.5" y1="555.5" x2="19.5" y2="555.5" stroke="#c9c9c9" stroke-width="1"/>
<circle cx="16" cy="586" r="1.4" fill="#cfcfcf"/>
<circle cx="21.5" cy="586" r="1.4" fill="#cfcfcf"/>
<circle cx="27" cy="586" r="1.4" fill="#cfcfcf"/>
<rect x="1165" y="90" width="97" height="103" fill="#3e3e3e"/>
<rect x="1166" y="91" width="95" height="101" fill="#535353"/>
<rect x="1166" y="91" width="95" height="10.5" fill="#424242"/>
<path d="M1232.6,93.7 L1235.1999999999998,95.9 L1232.6,98.10000000000001 M1236.3999999999999,93.7 L1239.0,95.9 L1236.3999999999999,98.10000000000001" fill="none" stroke="#dcdcdc" stroke-width="1.5"/>
<path d="M1250,93 L1255,98.5 M1255,93 L1250,98.5" fill="none" stroke="#d0d0d0" stroke-width="1.6"/>
<rect x="1204" y="104.5" width="1.1" height="2.5" fill="#3e3e3e"/>
<rect x="1206" y="104.5" width="1.1" height="2.5" fill="#3e3e3e"/>
<rect x="1208" y="104.5" width="1.1" height="2.5" fill="#3e3e3e"/>
<rect x="1210" y="104.5" width="1.1" height="2.5" fill="#3e3e3e"/>
<rect x="1212" y="104.5" width="1.1" height="2.5" fill="#3e3e3e"/>
<rect x="1214" y="104.5" width="1.1" height="2.5" fill="#3e3e3e"/>
<rect x="1216" y="104.5" width="1.1" height="2.5" fill="#3e3e3e"/>
<rect x="1218" y="104.5" width="1.1" height="2.5" fill="#3e3e3e"/>
<rect x="1220" y="104.5" width="1.1" height="2.5" fill="#3e3e3e"/>
<rect x="1222" y="104.5" width="1.1" height="2.5" fill="#3e3e3e"/>
<path d="M1181.5,115 L1187,118 L1187,124 L1181.5,127 L1176,124 L1176,118 Z" fill="none" stroke="#c4c4c4" stroke-width="1.1"/>
<path d="M1176,118 L1181.5,121 L1187,118 M1181.5,121 L1181.5,127" fill="none" stroke="#b8b8b8" stroke-width="0.9"/>
<rect x="1188.8" y="115.7" width="4" height="4" fill="#c8c8c8"/>
<rect x="1188.8" y="121.2" width="4" height="4" fill="#c8c8c8"/>
<line x1="1190.8" y1="115.7" x2="1190.8" y2="125.2" stroke="#777" stroke-width="0.5"/>
<line x1="1188.8" y1="117.7" x2="1192.8" y2="117.7" stroke="#777" stroke-width="0.5"/>
<line x1="1188.8" y1="123.2" x2="1192.8" y2="123.2" stroke="#777" stroke-width="0.5"/>
<rect x="1176.3" y="127.8" width="16.4" height="4.3" fill="#c8c8c8"/>
<path d="M1189,129 L1192,129 L1190.5,131 Z" fill="#444"/>
<text x="1201.3" y="127" font-family="Liberation Sans" font-size="11" fill="#e6e6e6" font-weight="bold" textLength="44" lengthAdjust="spacingAndGlyphs">Properties</text>
<path d="M1184,142.5 L1192,147 L1184,151.5 L1176,147 Z" fill="#c9c9c9"/>
<path d="M1176,151 L1184,155.5 L1192,151" fill="none" stroke="#c9c9c9" stroke-width="1.8"/>
<text x="1201.3" y="153.5" font-family="Liberation Sans" font-size="11" fill="#e6e6e6" font-weight="bold" textLength="30" lengthAdjust="spacingAndGlyphs">Layers</text>
<rect x="1177" y="168.5" width="13" height="14" fill="none" stroke="#bdbdbd" stroke-width="1.1"/>
<rect x="1179" y="170.5" width="11" height="12" fill="none" stroke="#c9c9c9" stroke-width="1.2"/>
<path d="M1185,170.5 L1185,176 L1187,174.5 L1189,176 L1189,170.5" fill="#c9c9c9"/>
<text x="1201.3" y="180" font-family="Liberation Sans" font-size="11" fill="#e6e6e6" font-weight="bold" textLength="40" lengthAdjust="spacingAndGlyphs">Libraries</text>
<rect x="1224" y="149" width="37" height="50.5" fill="#3e3e3e"/>
<rect x="1225" y="150" width="35" height="48" fill="#535353"/>
<rect x="1225" y="150" width="35" height="10.5" fill="#424242"/>
<path d="M1232.6,152.8 L1235.1999999999998,155 L1232.6,157.2 M1236.3999999999999,152.8 L1239.0,155 L1236.3999999999999,157.2" fill="none" stroke="#dcdcdc" stroke-width="1.5"/>
<path d="M1249,152.5 L1254,157.5 M1254,152.5 L1249,157.5" fill="none" stroke="#d0d0d0" stroke-width="1.6"/>
<rect x="1233" y="163.5" width="1.1" height="2.5" fill="#3e3e3e"/>
<rect x="1235" y="163.5" width="1.1" height="2.5" fill="#3e3e3e"/>
<rect x="1237" y="163.5" width="1.1" height="2.5" fill="#3e3e3e"/>
<rect x="1239" y="163.5" width="1.1" height="2.5" fill="#3e3e3e"/>
<rect x="1241" y="163.5" width="1.1" height="2.5" fill="#3e3e3e"/>
<rect x="1243" y="163.5" width="1.1" height="2.5" fill="#3e3e3e"/>
<rect x="1245" y="163.5" width="1.1" height="2.5" fill="#3e3e3e"/>
<rect x="1247" y="163.5" width="1.1" height="2.5" fill="#3e3e3e"/>
<rect x="1249" y="163.5" width="1.1" height="2.5" fill="#3e3e3e"/>
<rect x="1251" y="163.5" width="1.1" height="2.5" fill="#3e3e3e"/>
<path d="M1236,186 C1233,181 1238,176 1245,177 C1252,178 1254,183 1251,185 C1249,186 1247,185 1247,187 C1247,189 1243,190 1240,189.5 C1238,189 1237,188 1236,186 Z" fill="#d0d0d0"/>
<circle cx="1240" cy="184" r="1.3" fill="#535353"/>
<circle cx="1243" cy="180.5" r="1.3" fill="#535353"/>
<circle cx="1247.5" cy="181" r="1.3" fill="#535353"/>
<circle cx="1243" cy="187" r="1.3" fill="#535353"/>
<rect x="1187.5" y="194" width="38" height="103.5" fill="#3e3e3e"/>
<rect x="1188.5" y="205" width="36" height="91.5" fill="#535353"/>
<rect x="1188.5" y="194.5" width="36" height="10.5" fill="#424242"/>
<rect x="1224.5" y="194" width="37.5" height="103.5" fill="#3e3e3e"/>
<rect x="1225.5" y="205" width="35.5" height="91.5" fill="#535353"/>
<rect x="1225.5" y="199" width="35.5" height="6" fill="#424242"/>
<path d="M1211.6,197.3 L1214.1999999999998,199.5 L1211.6,201.7 M1215.3999999999999,197.3 L1218.0,199.5 L1215.3999999999999,201.7" fill="none" stroke="#dcdcdc" stroke-width="1.5"/>
<rect x="1224.5" y="296" width="37.5" height="92" fill="#3e3e3e"/>
<rect x="1225.5" y="297" width="35.5" height="89.5" fill="#535353"/>
<rect x="1197" y="208" width="1.1" height="2.5" fill="#3e3e3e"/>
<rect x="1199" y="208" width="1.1" height="2.5" fill="#3e3e3e"/>
<rect x="1201" y="208" width="1.1" height="2.5" fill="#3e3e3e"/>
<rect x="1203" y="208" width="1.1" height="2.5" fill="#3e3e3e"/>
<rect x="1205" y="208" width="1.1" height="2.5" fill="#3e3e3e"/>
<rect x="1207" y="208" width="1.1" height="2.5" fill="#3e3e3e"/>
<rect x="1209" y="208" width="1.1" height="2.5" fill="#3e3e3e"/>
<rect x="1211" y="208" width="1.1" height="2.5" fill="#3e3e3e"/>
<rect x="1213" y="208" width="1.1" height="2.5" fill="#3e3e3e"/>
<rect x="1215" y="208" width="1.1" height="2.5" fill="#3e3e3e"/>
<rect x="1234" y="208" width="1.1" height="2.5" fill="#3e3e3e"/>
<rect x="1234" y="300" width="1.1" height="2.5" fill="#3e3e3e"/>
<rect x="1236" y="208" width="1.1" height="2.5" fill="#3e3e3e"/>
<rect x="1236" y="300" width="1.1" height="2.5" fill="#3e3e3e"/>
<rect x="1238" y="208" width="1.1" height="2.5" fill="#3e3e3e"/>
<rect x="1238" y="300" width="1.1" height="2.5" fill="#3e3e3e"/>
<rect x="1240" y="208" width="1.1" height="2.5" fill="#3e3e3e"/>
<rect x="1240" y="300" width="1.1" height="2.5" fill="#3e3e3e"/>
<rect x="1242" y="208" width="1.1" height="2.5" fill="#3e3e3e"/>
<rect x="1242" y="300" width="1.1" height="2.5" fill="#3e3e3e"/>
<rect x="1244" y="208" width="1.1" height="2.5" fill="#3e3e3e"/>
<rect x="1244" y="300" width="1.1" height="2.5" fill="#3e3e3e"/>
<rect x="1246" y="208" width="1.1" height="2.5" fill="#3e3e3e"/>
<rect x="1246" y="300" width="1.1" height="2.5" fill="#3e3e3e"/>
<rect x="1248" y="208" width="1.1" height="2.5" fill="#3e3e3e"/>
<rect x="1248" y="300" width="1.1" height="2.5" fill="#3e3e3e"/>
<rect x="1250" y="208" width="1.1" height="2.5" fill="#3e3e3e"/>
<rect x="1250" y="300" width="1.1" height="2.5" fill="#3e3e3e"/>
<rect x="1252" y="208" width="1.1" height="2.5" fill="#3e3e3e"/>
<rect x="1252" y="300" width="1.1" height="2.5" fill="#3e3e3e"/>
<rect x="1199" y="221.5" width="15" height="11" fill="#c9c9c9"/>
<rect x="1199" y="226.5" width="15" height="1" fill="#535353"/>
<rect x="1203.8" y="221.5" width="1" height="11" fill="#535353"/>
<rect x="1208.8" y="221.5" width="1" height="11" fill="#535353"/>
<rect x="1201" y="252" width="10" height="8" fill="#c9c9c9"/>
<path d="M1203,252 L1200,245 M1206,252 L1206,244 M1209,252 L1212,246" fill="none" stroke="#c9c9c9" stroke-width="1.8"/>
<circle cx="1200" cy="245.5" r="2" fill="#c9c9c9"/><circle cx="1212.5" cy="246" r="2" fill="#c9c9c9"/>
<circle cx="1207" cy="274.5" r="3.6" fill="#c9c9c9"/><circle cx="1203" cy="280" r="3.6" fill="#c9c9c9"/><circle cx="1211" cy="280" r="3.6" fill="#c9c9c9"/>
<path d="M1207,279 L1204,287 L1210,287 Z" fill="#c9c9c9"/>
<rect x="1238.5" y="221.5" width="12" height="12" fill="none" stroke="#c9c9c9" stroke-width="1" stroke-dasharray="1.5 1"/>
<rect x="1236.7" y="219.7" width="3.6" height="3.6" fill="#d6d6d6"/>
<rect x="1248.7" y="219.7" width="3.6" height="3.6" fill="#d6d6d6"/>
<rect x="1236.7" y="231.7" width="3.6" height="3.6" fill="#d6d6d6"/>
<rect x="1248.7" y="231.7" width="3.6" height="3.6" fill="#d6d6d6"/>
<rect x="1244" y="227" width="1.5" height="1.5" fill="#d6d6d6"/>
<rect x="1237.5" y="245" width="1.5" height="16" fill="#c9c9c9"/>
<rect x="1240" y="247" width="7" height="4.5" fill="#c9c9c9"/>
<rect x="1240" y="253.5" width="11" height="4.5" fill="#c9c9c9"/>
<rect x="1237.5" y="273" width="8" height="8" fill="#c9c9c9" stroke="#c9c9c9" stroke-width="0.5"/>
<rect x="1242" y="277.5" width="9" height="9" fill="#8d8d8d" stroke="#d0d0d0" stroke-width="1.2"/>
<defs><linearGradient id="g3" x1="0" y1="0" x2="1" y2="0"><stop offset="0" stop-color="#f0f0f0"/><stop offset="1" stop-color="#333"/></linearGradient></defs>
<rect x="1237.5" y="312" width="13" height="11" fill="url(#g3)" stroke="#d6d6d6" stroke-width="1.3"/>
<rect x="1237" y="339" width="15" height="2.2" fill="#d0d0d0"/>
<rect x="1237" y="344" width="15" height="2.2" fill="#d0d0d0"/>
<rect x="1237" y="349" width="15" height="2.2" fill="#d0d0d0"/>
<circle cx="1242" cy="369" r="5.5" fill="#c9c9c9"/><circle cx="1246" cy="373.5" r="5.5" fill="#8d8d8d" stroke="#d0d0d0" stroke-width="1"/>
<rect x="47" y="663.5" width="46" height="14" fill="#444444"/>
<text x="49" y="674.5" font-family="Liberation Sans" font-size="10" fill="#d8d8d8" textLength="31" lengthAdjust="spacingAndGlyphs">66.67%</text>
<rect x="93.5" y="663.5" width="15.5" height="14" fill="#474747"/>
<path d="M97.5,668.1 L101,671.9 L104.5,668.1" fill="none" stroke="#d0d0d0" stroke-width="1.3" stroke-linecap="round" stroke-linejoin="round"/>
<path d="M121,667 L121,674 M126.5,667 L122.5,670.5 L126.5,674 M141,667 L137,670.5 L141,674" fill="none" stroke="#6a6a6a" stroke-width="1.1"/>
<rect x="150" y="663.5" width="36" height="14" fill="#444444"/>
<text x="152.5" y="674.5" font-family="Liberation Sans" font-size="10" fill="#d8d8d8">1</text>
<rect x="186" y="663.5" width="16" height="14" fill="#474747"/>
<path d="M190.5,668.1 L194,671.9 L197.5,668.1" fill="none" stroke="#d0d0d0" stroke-width="1.3" stroke-linecap="round" stroke-linejoin="round"/>
<path d="M213,667 L217,670.5 L213,674 M229,667 L233,670.5 L229,674 M234,667 L234,674" fill="none" stroke="#6a6a6a" stroke-width="1.1"/>
<line x1="243.5" y1="663" x2="243.5" y2="677" stroke="#424242" stroke-width="1"/>
<text x="318.5" y="675" font-family="Liberation Sans" font-size="10" fill="#a8a8a8" textLength="37" lengthAdjust="spacingAndGlyphs">Selection</text>
<path d="M436,666.5 L441.5,670.5 L436,674.5 Z" fill="#d0d0d0"/>
<path d="M458,667 L455,670.5 L458,674" fill="none" stroke="#a0a0a0" stroke-width="1.2"/>
<rect x="838" y="664.5" width="25" height="12" fill="#6a6a6a" rx="6"/>
<path d="M1250,667 L1253,670.5 L1250,674" fill="none" stroke="#a0a0a0" stroke-width="1.2"/>
<rect x="0" y="681" width="1280" height="39" fill="#202020"/>
<path d="M13,694.5 L20,693.5 L20,700 L13,700 Z M21,693.3 L29.5,692 L29.5,700 L21,700 Z M13,701 L20,701 L20,707.5 L13,706.5 Z M21,701 L29.5,701 L29.5,709 L21,707.7 Z" fill="#ffffff"/>
<rect x="44" y="681" width="322" height="39" fill="#f0f0f0"/>
<circle cx="63.2" cy="700.4" r="8.5" fill="none" stroke="#111" stroke-width="2.6"/>
<text x="82.2" y="706" font-family="Liberation Sans" font-size="14" fill="#3a3a3a" textLength="119.5" lengthAdjust="spacingAndGlyphs">Type here to search</text>
<rect x="345" y="692" width="5" height="10" fill="none" rx="2.5" stroke="#333" stroke-width="1.2"/>
<path d="M343,699 C343,704 352,704 352,699 M347.5,703.5 L347.5,707 M345,707 L350,707" fill="none" stroke="#333" stroke-width="1.1"/>
<path d="M381,693.5 L393,693.5 M381,707.5 L393,707.5" fill="none" stroke="#fff" stroke-width="1.2"/>
<rect x="382" y="696.5" width="9" height="8" fill="none" stroke="#fff" stroke-width="1.2"/>
<path d="M395,693 L395,709" fill="none" stroke="#fff" stroke-width="1.2"/>
<rect x="394" y="697" width="2" height="3" fill="#fff"/>
<defs><linearGradient id="ed" x1="0" y1="0" x2="1" y2="1"><stop offset="0" stop-color="#35c1f1"/><stop offset=".55" stop-color="#1f8dd6"/><stop offset="1" stop-color="#0c59a4"/></linearGradient><linearGradient id="ed2" x1="0" y1="0" x2="1" y2="0"><stop offset="0" stop-color="#53e08f"/><stop offset="1" stop-color="#2fb5e0"/></linearGradient></defs>
<circle cx="437" cy="700.5" r="11.5" fill="url(#ed)"/>
<path d="M427,704 C429,694 443,692 447,700 C446,705 438,705 436,702 C434,699 436,696 440,696 C433,695 428,699 431,706 C433,710 438,712 444,710 C438,713 430,711 427,704 Z" fill="#0a4f94"/>
<path d="M440,696 C446,696 449,701 447,704 C445,707 438,707 436,703 C438,705 444,704 444,700 C444,697 441,696 440,696 Z" fill="url(#ed2)"/>
<circle cx="482" cy="700.5" r="11" fill="#2aa3dc"/>
<path d="M476,700 L488,695 L486,706 L482,703 L480,706 L480,702 L486,697 L478.5,701.5 Z" fill="#ffffff"/>
<circle cx="528" cy="700.5" r="11.5" fill="#db4437"/>
<path d="M528,700.5 L538,695 A11.5,11.5 0 0 1 533.8,710.4 Z" fill="#f4c20d"/>
<path d="M528,700.5 L533.8,710.4 A11.5,11.5 0 0 1 518,694.8 Z" fill="#0f9d58"/>
<circle cx="528" cy="700.5" r="5" fill="#ffffff"/><circle cx="528" cy="700.5" r="4" fill="#4285f4"/>
<path d="M565,704 C563,697 570,691 578,692 C585,693 585,698 581,700 C578,701 580,704 578,706 C575,709 567,709 565,704 Z" fill="#dfe9f3"/>
<circle cx="569" cy="700" r="1.5" fill="#e33"/>
<circle cx="572" cy="696" r="1.5" fill="#3a3"/>
<circle cx="576" cy="695" r="1.5" fill="#33d"/>
<circle cx="570" cy="704" r="1.5" fill="#fb0"/>
<line x1="574" y1="708" x2="585" y2="690" stroke="#d99a3a" stroke-width="2.4"/>
<rect x="616" y="689" width="9" height="16" fill="#8a8f96" rx="3"/>
<circle cx="620.5" cy="700" r="2" fill="#e84b2a"/>
<rect x="614" y="704" width="13" height="3" fill="#9aa0a6"/>
<rect x="619.5" y="707" width="2" height="4" fill="#9aa0a6"/>
<ellipse cx="667" cy="698" rx="10" ry="6" transform="rotate(-20 667 698)" fill="#eeeeee" stroke="#c83a3a" stroke-width="1"/>
<ellipse cx="665" cy="701.5" rx="10" ry="5" transform="rotate(-20 665 701.5)" fill="#888" opacity=".6"/>
<ellipse cx="667" cy="697.5" rx="9" ry="5.5" transform="rotate(-20 667 697.5)" fill="#eeeeee" stroke="#c83a3a" stroke-width="1"/>
<path d="M664,692 L668,704 M672,692 L668,704" fill="none" stroke="#888" stroke-width="1"/>
<circle cx="671.5" cy="707" r="2.3" fill="none" stroke="#2a8fd0" stroke-width="1.4"/><circle cx="676" cy="704.5" r="2.3" fill="none" stroke="#2a8fd0" stroke-width="1.4"/>
<circle cx="712" cy="700" r="11" fill="#db4437"/>
<path d="M712,700 L721.5,694.5 A11,11 0 0 1 717.5,709.5 Z" fill="#f4c20d"/>
<path d="M712,700 L717.5,709.5 A11,11 0 0 1 702.5,694.5 Z" fill="#0f9d58"/>
<circle cx="712" cy="700" r="4.8" fill="#fff"/><circle cx="712" cy="700" r="3.8" fill="#4285f4"/>
<circle cx="717" cy="705" r="6.5" fill="#9a9a9a"/><circle cx="717" cy="704" r="4.5" fill="#c7a07a"/>
<rect x="713.5" y="702" width="7" height="1.6" fill="#222"/>
<rect x="736" y="682" width="45" height="38" fill="#3f3f3f"/>
<rect x="748.5" y="690" width="20" height="19" fill="#2f1a05" stroke="#ff9a00" stroke-width="1.3"/>
<text x="751" y="704.5" font-family="Liberation Sans" font-size="11" fill="#ff9a00" font-weight="bold" textLength="13" lengthAdjust="spacingAndGlyphs">Ai</text>
<rect x="648" y="717" width="37" height="3" fill="#76b9ed"/>
<rect x="694" y="717" width="37" height="3" fill="#76b9ed"/>
<rect x="736" y="717" width="45" height="3" fill="#76b9ed"/>
<path d="M1086,703 L1091.5,697.5 L1097,703" fill="none" stroke="#fff" stroke-width="1.3"/>
<rect x="1110" y="698" width="12" height="7" fill="none" stroke="#fff" stroke-width="1.2"/>
<rect x="1111.5" y="699.5" width="8" height="4" fill="#fff"/>
<rect x="1122" y="700" width="1.5" height="3" fill="#fff"/>
<path d="M1106.5,695 L1106.5,698.5 M1108.5,695 L1108.5,698.5 M1105.5,698.5 L1109.5,698.5 L1109.5,701 L1105.5,701 Z M1107.5,701 L1107.5,706" fill="none" stroke="#fff" stroke-width="1"/>
<path d="M1128.5,698.5 L1131.5,698.5 L1135,695 L1135,706 L1131.5,702.5 L1128.5,702.5 Z" fill="none" stroke="#fff" stroke-width="1.1"/>
<path d="M1137.5,697.5 C1139,699 1139,702 1137.5,703.5 M1140,695.5 C1142.5,698 1142.5,703 1140,705.5 M1142.5,693.5 C1146,697 1146,704 1142.5,707.5" fill="none" stroke="#fff" stroke-width="1.1"/>
<path d="M1154,705 C1154,700 1159,695 1164,695 M1157,705.5 C1157,702 1160,698.5 1164,698.5 M1160,706 C1160,704 1162,702 1164,702" fill="none" stroke="#ddd" stroke-width="1.2"/>
<circle cx="1164" cy="705.5" r="1.4" fill="#fff"/>
<text x="1177.7" y="696.3" font-family="Liberation Sans" font-size="12" fill="#ffffff" textLength="44.5" lengthAdjust="spacingAndGlyphs">11:03 PM</text>
<text x="1178" y="712.7" font-family="Liberation Sans" font-size="12" fill="#ffffff" textLength="43.5" lengthAdjust="spacingAndGlyphs">8/1/2023</text>
<path d="M1242,693.5 L1260,693.5 L1260,706 L1249,706 L1245,710 L1245,706 L1242,706 Z" fill="#fff"/>
<rect x="1245" y="697" width="12" height="1.2" fill="#333"/>
<rect x="1245" y="700" width="12" height="1.2" fill="#333"/>
<rect x="1245" y="703" width="12" height="1.2" fill="#333"/>
<circle cx="1255.5" cy="707" r="8" fill="#202020" stroke="#777" stroke-width="1.3"/>
<text x="1251.5" y="711.5" font-family="Liberation Sans" font-size="11" fill="#fff" textLength="7.5" lengthAdjust="spacingAndGlyphs">8</text>
<line x1="1275.5" y1="681" x2="1275.5" y2="720" stroke="#5a5a5a" stroke-width="1"/></svg>
</body></html>
